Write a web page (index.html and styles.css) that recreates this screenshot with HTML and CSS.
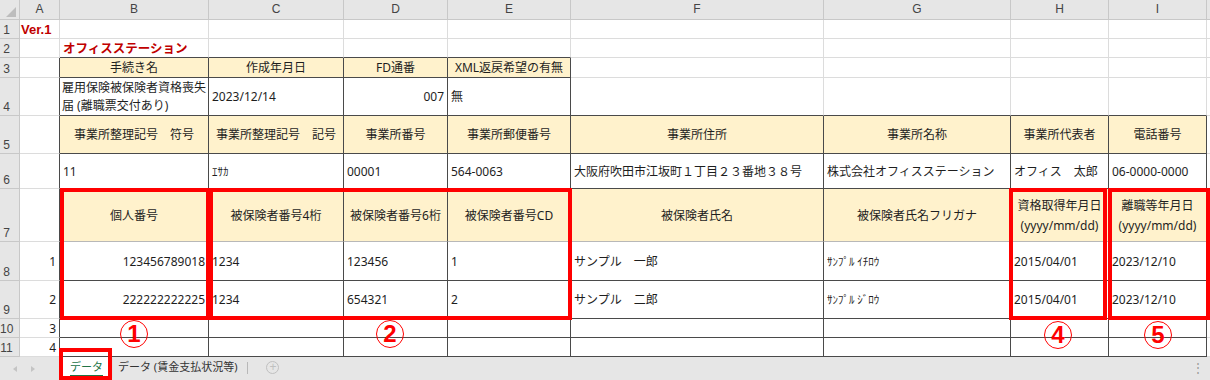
FILE: index.html
```html
<!DOCTYPE html>
<html>
  <head>
    <meta charset="UTF-8">
    <meta name="viewport" content="width=device-width,initial-scale=1">
    <title>データ</title>
    <link rel="stylesheet" href="styles.css">
  </head>
  <body>
    <div class="book">
      <table class="sheet">
        <colgroup>
          <col class="w-hd"><col class="w-a"><col class="w-b"><col class="w-c"><col class="w-d"><col class="w-e">
          <col class="w-f"><col class="w-g"><col class="w-h"><col class="w-i"><col class="w-j">
        </colgroup>
        <tr class="r-hd">
          <th class="corner"><span class="tri"></span></th>
          <th class="cl">A</th><th class="cl">B</th><th class="cl">C</th><th class="cl">D</th><th class="cl">E</th>
          <th class="cl">F</th><th class="cl">G</th><th class="cl">H</th><th class="cl">I</th><th class="cl"></th>
        </tr>
        <tr class="r-s">
          <th class="rn">1</th>
          <td class="ver">Ver.1</td><td></td><td></td><td></td><td></td><td></td><td></td><td></td><td></td><td></td>
        </tr>
        <tr class="r-s">
          <th class="rn">2</th>
          <td></td><td class="title xb">オフィスステーション</td><td class="xb"></td><td class="xb"></td><td class="xb"></td>
          <td></td><td></td><td></td><td></td><td></td>
        </tr>
        <tr class="r-3">
          <th class="rn">3</th>
          <td class="xr"></td>
          <td class="x head">手続き名</td><td class="x head">作成年月日</td><td class="x head">FD通番</td><td class="x head">XML返戻希望の有無</td>
          <td></td><td></td><td></td><td></td><td></td>
        </tr>
        <tr class="r-4">
          <th class="rn">4</th>
          <td class="xr"></td>
          <td class="x wrap">雇用保険被保険者資格喪失届 (離職票交付あり)</td><td class="x">2023/12/14</td><td class="x num">007</td><td class="x">無</td>
          <td class="xb"></td><td class="xb"></td><td class="xb"></td><td class="xb"></td><td></td>
        </tr>
        <tr class="r-5">
          <th class="rn">5</th>
          <td class="xr"></td>
          <td class="x head">事業所整理記号　符号</td><td class="x head">事業所整理記号　記号</td><td class="x head">事業所番号</td>
          <td class="x head">事業所郵便番号</td><td class="x head">事業所住所</td><td class="x head">事業所名称</td>
          <td class="x head">事業所代表者</td><td class="x head">電話番号</td><td></td>
        </tr>
        <tr class="r-6">
          <th class="rn">6</th>
          <td class="xr"></td>
          <td class="x">11</td><td class="x kana">ｴｻｶ</td><td class="x">00001</td><td class="x">564-0063</td>
          <td class="x">大阪府吹田市江坂町１丁目２３番地３８号</td><td class="x">株式会社オフィスステーション</td>
          <td class="x">オフィス　太郎</td><td class="x">06-0000-0000</td><td></td>
        </tr>
        <tr class="r-7">
          <th class="rn">7</th>
          <td class="xr"></td>
          <td class="x head">個人番号</td><td class="x head">被保険者番号4桁</td><td class="x head">被保険者番号6桁</td>
          <td class="x head">被保険者番号CD</td><td class="x head">被保険者氏名</td><td class="x head">被保険者氏名フリガナ</td>
          <td class="x head two">資格取得年月日<br>(yyyy/mm/dd)</td><td class="x head two">離職等年月日<br>(yyyy/mm/dd)</td><td></td>
        </tr>
        <tr class="r-8">
          <th class="rn">8</th>
          <td class="xr num">1</td>
          <td class="x num">123456789018</td><td class="x">1234</td><td class="x">123456</td><td class="x">1</td>
          <td class="x">サンプル　一郎</td><td class="x kana">ｻﾝﾌﾟﾙ ｲﾁﾛｳ</td><td class="x">2015/04/01</td><td class="x">2023/12/10</td><td></td>
        </tr>
        <tr class="r-9">
          <th class="rn">9</th>
          <td class="xr num">2</td>
          <td class="x num">222222222225</td><td class="x">1234</td><td class="x">654321</td><td class="x">2</td>
          <td class="x">サンプル　二郎</td><td class="x kana">ｻﾝﾌﾟﾙ ｼﾞﾛｳ</td><td class="x">2015/04/01</td><td class="x">2023/12/10</td><td></td>
        </tr>
        <tr class="r-s">
          <th class="rn">10</th>
          <td class="xr num">3</td>
          <td class="x"></td><td class="x"></td><td class="x"></td><td class="x"></td><td class="x"></td><td class="x"></td><td class="x"></td><td class="x"></td><td></td>
        </tr>
        <tr class="r-s">
          <th class="rn">11</th>
          <td class="xr num">4</td>
          <td class="x"></td><td class="x"></td><td class="x"></td><td class="x"></td><td class="x"></td><td class="x"></td><td class="x"></td><td class="x"></td><td></td>
        </tr>
      </table>

      <div class="tabs">
        <div class="nav"><span class="arr-l"></span><span class="arr-r"></span></div>
        <div class="tab on"><span>データ</span></div>
        <div class="tab">データ (賃金支払状況等)</div>
        <div class="sep"></div>
        <div class="add">+</div>
        <div class="fill"></div>
        <div class="dots">⋮</div>
      </div>

      <!-- 注記の赤枠と丸数字 -->
      <div class="mark m1"></div>
      <div class="mark m2"></div>
      <div class="mark m4"></div>
      <div class="mark m5"></div>
      <div class="mark m-tab"></div>
      <div class="no no1">1</div>
      <div class="no no2">2</div>
      <div class="no no4">4</div>
      <div class="no no5">5</div>
    </div>
  </body>
</html>
```

FILE: styles.css
```css
body {
  margin: 0;
  background: #ffffff;
  color: #1e1e1e;
  font-family: "Noto Sans", "Noto Sans CJK JP", sans-serif;
  font-size: 12px;
}
.book {
  position: relative;
  width: 1210px;
  height: 380px;
  overflow: hidden;
}

/* シート */
.sheet {
  table-layout: fixed;
  border-collapse: separate;
  border-spacing: 0;
  width: 1217px;
  font-size: 12px;
}
.w-hd { width: 20px; }
.w-a { width: 40px; }
.w-b { width: 149px; }
.w-c { width: 135px; }
.w-d { width: 104px; }
.w-e { width: 123px; }
.w-f { width: 253px; }
.w-g { width: 187px; }
.w-h { width: 98px; }
.w-i { width: 98px; }
.w-j { width: 10px; }

.sheet td, .sheet th {
  box-sizing: border-box;
  padding: 0 3px;
  border-right: 1px solid #dcdcdc;
  border-bottom: 1px solid #dcdcdc;
  white-space: nowrap;
  overflow: hidden;
  font-weight: normal;
  font-size: 12px;
  line-height: 15px;
  vertical-align: middle;
  text-align: left;
}
.r-hd { height: 20px; }
.r-s { height: 19px; }
.r-3 { height: 20px; }
.r-4 { height: 38px; }
.r-5 { height: 38px; }
.r-6 { height: 35px; }
.r-7 { height: 53px; }
.r-8 { height: 39px; }
.r-9 { height: 38px; }

.sheet th {
  background: #e6e6e6;
  color: #444444;
  border-right-color: #c8c8c8;
  border-bottom-color: #c8c8c8;
}
.sheet th.cl {
  text-align: center;
  font-family: "Liberation Sans", sans-serif;
  font-size: 12px;
}
.sheet th.rn {
  padding: 0 6px 0 0;
  text-align: center;
  vertical-align: bottom;
  font-family: "Liberation Sans", sans-serif;
  font-size: 12px;
  line-height: 15px;
}
.corner {
  position: relative;
}
.tri {
  position: absolute;
  right: 3px;
  bottom: 2px;
  width: 0;
  height: 0;
  border-left: 10px solid transparent;
  border-bottom: 10px solid #bdbdbd;
}

.sheet td.x {
  border-right-color: #4a4a4a;
  border-bottom-color: #4a4a4a;
}
.sheet td.xr {
  border-right-color: #4a4a4a;
}
.sheet td.xb {
  border-bottom-color: #4a4a4a;
}
.sheet .r-7 td.x {
  border-bottom-color: #b8b8b8;
}
.sheet td.head {
  background: #fff2cc;
  text-align: center;
}
.sheet td.two {
  line-height: 20px;
  padding-top: 2px;
}
.sheet td.num {
  text-align: right;
}
.sheet td.wrap {
  white-space: normal;
  line-height: 18px;
  padding-left: 2px;
  padding-right: 0;
}
.sheet td.kana {
  font-size: 11px;
}
.sheet td.ver, .sheet td.title {
  color: #c00000;
  font-weight: bold;
}
.sheet td.ver {
  font-family: "Liberation Sans", sans-serif;
  font-size: 13px;
  padding-left: 1px;
}
.sheet td.title {
  font-size: 12.5px;
}

/* シート見出し */
.tabs {
  display: flex;
  align-items: flex-start;
  height: 23px;
  background: #e6e6e6;
  font-size: 11px;
  color: #333333;
}
.nav {
  display: flex;
  align-items: center;
  gap: 14px;
  width: 63px;
  height: 23px;
  padding-left: 13px;
  box-sizing: border-box;
}
.arr-l, .arr-r {
  width: 0;
  height: 0;
  border-top: 3px solid transparent;
  border-bottom: 3px solid transparent;
}
.arr-l { border-right: 4px solid #c4c4c4; }
.arr-r { border-left: 4px solid #c4c4c4; }
.tab {
  height: 20px;
  line-height: 19px;
  padding: 0 8px;
  white-space: nowrap;
}
.tab.on {
  background: #ffffff;
  color: #217346;
  padding: 0 7px;
  box-shadow: 1px 1px 2px rgba(0, 0, 0, 0.25);
}
.tab.on span {
  display: inline-block;
  line-height: 16px;
  border-bottom: 2px solid #217346;
}
.sep {
  width: 1px;
  height: 12px;
  margin: 5px 0 0 2px;
  background: #b8b8b8;
}
.add {
  width: 13px;
  height: 13px;
  margin: 4px 0 0 18px;
  border: 1px solid #c0c0c0;
  border-radius: 50%;
  box-sizing: border-box;
  color: #c0c0c0;
  font: 12px/11px "Liberation Sans", sans-serif;
  text-align: center;
}
.fill {
  flex: 1;
}
.dots {
  width: 18px;
  line-height: 22px;
  color: #9a9a9a;
  font-size: 12px;
}

/* 注記 */
.mark {
  position: absolute;
  box-sizing: border-box;
  border: 4px solid #ff0000;
}
.m1 { left: 60px; top: 188px; width: 150px; height: 132px; }
.m2 { left: 209px; top: 188px; width: 363px; height: 132px; }
.m4 { left: 1009px; top: 188px; width: 98px; height: 132px; }
.m5 { left: 1108px; top: 188px; width: 102px; height: 132px; }
.m-tab { left: 59px; top: 348px; width: 53px; height: 32px; }

.no {
  position: absolute;
  box-sizing: border-box;
  width: 28px;
  height: 28px;
  border: 1px solid #ff0000;
  border-radius: 50%;
  color: #ff0000;
  font: bold 24px/26px "Liberation Sans", sans-serif;
  text-align: center;
}
.no1 { left: 120px; top: 320px; }
.no2 { left: 376px; top: 320px; }
.no4 { left: 1044px; top: 321px; }
.no5 { left: 1144px; top: 321px; }
```
